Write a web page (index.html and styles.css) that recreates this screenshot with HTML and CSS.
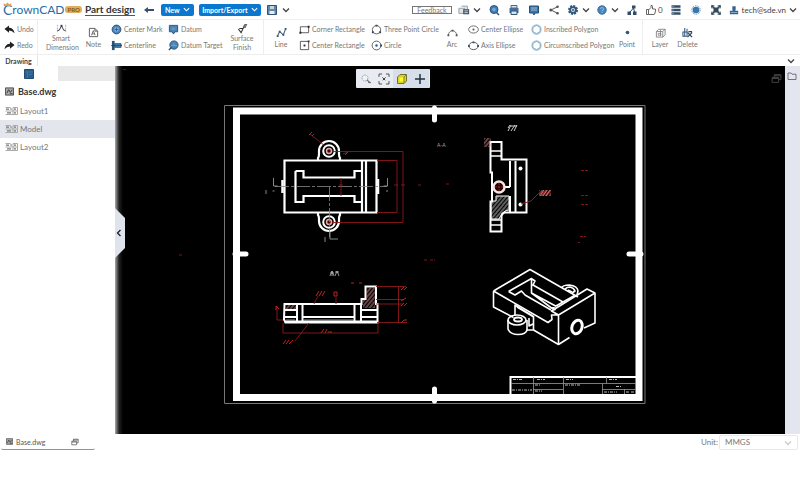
FILE: index.html
```html
<!DOCTYPE html>
<html lang="en">
<head>
<meta charset="utf-8">
<meta name="viewport" content="width=device-width, initial-scale=1">
<title>CrownCAD - Base.dwg</title>
<link rel="stylesheet" href="styles.css">
</head>
<body>
<svg class="sprite" aria-hidden="true">
  <symbol id="chev" viewBox="0 0 8 8"><path d="M1 2.5 4 5.5 7 2.5" fill="none" stroke="currentColor" stroke-width="1.3"/></symbol>
  <symbol id="back" viewBox="0 0 12 12"><path d="M1 6 5 3v2h6v2H5v2z" fill="#34506e"/></symbol>
  <symbol id="save" viewBox="0 0 12 12"><path d="M1.5 1.5h9v9h-9z" fill="#6387a6" stroke="#34506e"/><path d="M4 2h4v3H4z" fill="#c5d3df"/><path d="M3.5 7h5v3h-5z" fill="#e7edf2"/></symbol>
  <symbol id="copy" viewBox="0 0 14 12"><path d="M1 4h7v6H1zM4 1.5h7V5" fill="#dfe4e8" stroke="#8b98a3"/><path d="M6 5h7v6H6z" fill="#44596c"/><path d="M7.500 7h4M7.500 9h4" stroke="#d5dde4"/></symbol>
  <symbol id="search" viewBox="0 0 12 12"><circle cx="6" cy="5.500" r="4" fill="#3f7dbb" stroke="#285582"/><circle cx="6" cy="5.500" r="1.800" fill="#75a7d5"/><path d="m8.500 8.500 2.500 2.500" stroke="#285582" stroke-width="1.500"/></symbol>
  <symbol id="print" viewBox="0 0 12 12"><path d="M3 1.500h6V4H3z" fill="#dbe4ec" stroke="#466a8c"/><path d="M1.500 4h9v5h-9z" fill="#466f99"/><path d="M3 7h6v3.500H3z" fill="#dbe4ec" stroke="#345474"/></symbol>
  <symbol id="screen" viewBox="0 0 12 12"><path d="M1.500 2h9v7H7l-1 2-1-2H1.500z" fill="#3c73a9" stroke="#294e73"/><path d="M3 4h6M3 6h6" stroke="#9dbddb"/></symbol>
  <symbol id="share" viewBox="0 0 12 12"><path d="M10 2.500 3 6l7 3.500" fill="none" stroke="#555"/><circle cx="9.500" cy="2.800" r="1.300" fill="#555"/><circle cx="9.500" cy="9.200" r="1.300" fill="#555"/><circle cx="2.800" cy="6" r="1.500" fill="#555"/></symbol>
  <symbol id="gear" viewBox="0 0 12 12"><circle cx="6" cy="6" r="4" fill="none" stroke="#31567c" stroke-width="2" stroke-dasharray="2 1.100"/><circle cx="6" cy="6" r="2.900" fill="#d7e4ef" stroke="#31567c" stroke-width="1.800"/><circle cx="6" cy="6" r="1" fill="#31567c"/></symbol>
  <symbol id="help" viewBox="0 0 12 12"><circle cx="6" cy="6" r="4.200" fill="#4485c0" stroke="#376b9a"/><path d="M4.500 5a1.500 1.500 0 1 1 1.500 1.500v1M6 8v1" stroke="#8dbbe0" fill="none"/></symbol>
  <symbol id="nodes" viewBox="0 0 12 12"><path d="M6 1.500h3.500v3H6zM1.500 7.500H5V11H1.500zM7 7.500h3.500V11H7z" fill="#2f4d6b"/><path d="M7.500 4 4 8M7.500 4l1 4" stroke="#2f4d6b"/></symbol>
  <symbol id="thumb" viewBox="0 0 12 12"><path d="M1.500 5.500h2v5h-2zM3.500 6 6 3.500V1.500q1.500-.5 1.500 1V5h2.800l.4 1-1 4-.7.500H3.500" fill="none" stroke="#555" stroke-width=".9"/></symbol>
  <symbol id="bars" viewBox="0 0 12 12"><path d="M1.500 2.500h9M1.500 6h9M1.500 9.500h9" stroke="#354f68" stroke-width="2.400"/><path d="M2.500 2.500h1M2.500 6h1M2.500 9.500h1" stroke="#b7cad9"/></symbol>
  <symbol id="burst" viewBox="0 0 12 12"><circle cx="6" cy="6" r="3.300" fill="#3976ac"/><circle cx="6" cy="6" r="4.200" fill="none" stroke="#5a90bd" stroke-dasharray="1.600 1"/></symbol>
  <symbol id="expand" viewBox="0 0 12 12"><path d="m2 2 8 8M10 2l-8 8" stroke="#33485c" stroke-width="1.500"/><path d="M2 4.500 1.500 1.500l3 .5M7.500 2l3-.5-.5 3M10 7.500l.5 3-3-.5M4.500 10l-3 .5.500-3" fill="none" stroke="#33485c"/><path d="M3.500 3.500h5v5h-5z" fill="#33485c"/></symbol>
  <symbol id="user" viewBox="0 0 12 12"><path d="M4 1.500h4v4L7.500 7h3.500v4H1V7h3.500L4 5.500z" fill="#38638d"/><path d="M2 9h8" stroke="#91b4d3"/></symbol>
  <symbol id="undo" viewBox="0 0 12 12"><path d="M.5 5.500 5.500 1.500V4q5 0 6 6Q9 7 5.500 7v2.500z" fill="#222"/></symbol>
  <symbol id="redo" viewBox="0 0 12 12"><path d="M11.500 5.500 6.500 1.500V4q-5 0-6 6Q3 7 6.500 7v2.500z" fill="#222"/></symbol>
  <symbol id="dim" viewBox="0 0 12 12"><path d="M1.500 2v8M10.500 2v8" stroke="#999" stroke-width=".8" stroke-dasharray="2 1"/><path d="M3.500 8 6 3l2.500 5M1.500 8h2M8.500 8h2" fill="none" stroke="#334"/><path d="M5 2h2v2H5z" fill="#334"/></symbol>
  <symbol id="note" viewBox="0 0 12 12"><path d="M1.500 1.500h6l3 3v6h-9zM7.500 1.500v3h3" fill="none" stroke="#555"/><path d="m3.800 9 2-5 2 5M4.500 7.500h2.600" fill="none" stroke="#555" stroke-width=".9"/></symbol>
  <symbol id="cmark" viewBox="0 0 12 12"><circle cx="6" cy="6" r="4.800" fill="#4784b9" stroke="#244e76"/><circle cx="6" cy="6" r="2.600" fill="#80b1da"/><path d="M6 4v4M4 6h4" stroke="#244e76" stroke-width=".8"/></symbol>
  <symbol id="cline" viewBox="0 0 12 12"><path d="M1 1h3v10H1z" fill="#295478"/><path d="M4 4h7v4H4z" fill="#4b83b5" stroke="#295478"/><path d="M0 6h12" stroke="#173550" stroke-width=".7"/></symbol>
  <symbol id="datum" viewBox="0 0 12 12"><path d="M1.500 1.500h9v7H7.500L6 11 4.500 8.500h-3z" fill="#4b83b5" stroke="#294f74"/><path d="M4 4h4v2.500H4z" fill="#6297c3"/></symbol>
  <symbol id="dtarget" viewBox="0 0 12 12"><circle cx="6.500" cy="5.500" r="4.500" fill="#4b83b5" stroke="#294f74"/><path d="M3 6h7M6.500 3v2.500" stroke="#7cabd1" stroke-width=".8"/><path d="m1 11 3-3" stroke="#294f74" stroke-width="1.500"/></symbol>
  <symbol id="surface" viewBox="0 0 12 12"><path d="m1.500 6.500 3 4L8.500 2h2.500M2.500 6h4" fill="none" stroke="#333" stroke-width="1.200"/><circle cx="8.500" cy="4" r="1.600" fill="#6a7682"/></symbol>
  <symbol id="line" viewBox="0 0 12 12"><path d="m1.500 10 2.500-5 4 3.500L10.500 2" fill="none" stroke="#4c6378" stroke-width="1.200"/><path d="M.8 9h2v2h-2zM3 4h2v2H3zM7 7.500h2v2H7zM9.500 1h2v2h-2z" fill="#31567b"/></symbol>
  <symbol id="crect" viewBox="0 0 12 12"><path d="M1.500 3h9v6.500h-9z" fill="none" stroke="#555"/><path d="M.5 8.500h2v2h-2zM9.500 2h2v2h-2z" fill="#222"/></symbol>
  <symbol id="mrect" viewBox="0 0 12 12"><path d="M1.500 1.500h9v9h-9z" fill="none" stroke="#555"/><path d="M5 5h2v2H5zM9.500.5h2v2h-2z" fill="#333"/></symbol>
  <symbol id="c3" viewBox="0 0 12 12"><circle cx="6" cy="6.300" r="4.500" fill="none" stroke="#555"/><path d="M5 .8h2v2H5zM1 8h2v2H1zM9 8h2v2H9z" fill="#31485e"/></symbol>
  <symbol id="c1" viewBox="0 0 12 12"><circle cx="6" cy="6" r="4.800" fill="none" stroke="#555"/><circle cx="6" cy="6" r="1.300" fill="#1f5d98"/><path d="M10 5h2v2h-2z" fill="#31485e"/></symbol>
  <symbol id="arc" viewBox="0 0 12 12"><path d="M1.500 9a4.500 5 0 0 1 9 0" fill="none" stroke="#666"/><path d="M.5 8h2v2h-2zM9.500 8h2v2h-2zM5 3h2v2H5z" fill="#555"/></symbol>
  <symbol id="el1" viewBox="0 0 12 12"><ellipse cx="6" cy="6" rx="5.300" ry="3.900" fill="none" stroke="#666"/><path d="M5 5h2v2H5z" fill="#555"/></symbol>
  <symbol id="el2" viewBox="0 0 12 12"><ellipse cx="6" cy="6.500" rx="5" ry="4" fill="none" stroke="#555"/><path d="M0 5.500h2v2H0zM10 5.500h2v2h-2zM5 1.500h2v2H5z" fill="#3e5568"/></symbol>
  <symbol id="poly" viewBox="0 0 12 12"><circle cx="6" cy="6" r="5" fill="none" stroke="#9fc6df" stroke-width="1.300"/><path d="m6 1.500 4 2.300v4.400l-4 2.300-4-2.300V3.800z" fill="none" stroke="#6b92ac" stroke-width=".8"/></symbol>
  <symbol id="point" viewBox="0 0 12 12"><circle cx="6" cy="6" r="2" fill="#31567b"/></symbol>
  <symbol id="layer" viewBox="0 0 12 12"><path d="M1.500 5 4 2.500h7v6L8.500 11h-7zM1.500 5h7v6M8.500 5 11 2.500" fill="none" stroke="#777" stroke-width=".9"/><path d="M3.500 7h3v2h-3zM6 3v7" fill="none" stroke="#777" stroke-width=".8"/></symbol>
  <symbol id="del" viewBox="0 0 12 12"><path d="M3 1v9M1 5.500h4.500V10H1zM5.500 2v4" fill="none" stroke="#31567b" stroke-width="1.100"/><path d="m6 6 5 5M11 6l-5 5M7 5h4" stroke="#294865" stroke-width="1.300"/></symbol>
  <symbol id="sheet" viewBox="0 0 10 10"><path d="M.5 1h9v8h-9z" fill="#aaa" stroke="#444"/><path d="m2 7 2-4 2 3 2-3M5.500 7.500h3" fill="none" stroke="#333"/></symbol>
  <symbol id="layout" viewBox="0 0 13 10"><path d="M.5 1.500h5M.5 5h12M.5 8.500h12M8 1.500h4.500v7H8z" fill="none" stroke="#aaa"/><path d="M1 3.200h3M2 6.800h4M9 3.200h2M9 6.800h2M5.500 2.500l1 1" stroke="#777" stroke-width="1.200"/></symbol>
  <symbol id="panel" viewBox="0 0 10 10"><path d="M.5.5h9v9h-9z" fill="#286090" stroke="#244b70"/><path d="M1 3h8M3.500 3v6M4.500 5.500H8" stroke="#437aa7" stroke-width=".8"/></symbol>
  <symbol id="win" viewBox="0 0 10 10"><path d="M1 4h6v4.500H1zM1 5h6M3 4V1.500h6V6H7M3 2.500h6" fill="none" stroke="currentColor" stroke-width=".9"/></symbol>
  <symbol id="folder" viewBox="0 0 10 10"><path d="M1 2h3l1 1.200h4V8.500H1z" fill="none" stroke="#666" stroke-width=".9"/></symbol>
  <symbol id="zoomwin" viewBox="0 0 12 12"><circle cx="5" cy="5" r="3" fill="#eef1f5" stroke="#a2a8ae" stroke-dasharray="2 .6"/><path d="m7 7 3.500 3M8 9.500h3" stroke="#777" stroke-width="1.200"/></symbol>
  <symbol id="fit" viewBox="0 0 12 12"><path d="M1 4V1h3M8 1h3v3M11 8v3H8M4 11H1V8" fill="none" stroke="#555"/><path d="m4 4 4 4M8 4 4 8" stroke="#666" stroke-width=".8" stroke-dasharray="1.500 1"/><path d="M5 5h2v2H5z" fill="#444"/></symbol>
  <symbol id="cube" viewBox="0 0 12 12"><path d="M1.500 4 4 1.500h6.500V8L8 10.500H1.500z" fill="#d8d228" stroke="#77732a"/><path d="M3.500 4.500h4v4h-4z" fill="#fff92f"/><path d="M8 4v6.500M8 4l2.500-2.500" stroke="#77732a" stroke-width=".8"/></symbol>
  <symbol id="plus" viewBox="0 0 12 12"><path d="M6 1v10M1 6h10" stroke="#26323d" stroke-width="1.500"/></symbol>
</svg>

<header class="topbar">
  <div class="brand">
    <svg class="crown" viewBox="0 0 12 5"><path d="m1 5 0-4 2.500 2L6 .5 8.500 3 11 1v4z" fill="#dfa24a"/></svg>
    <span class="brand-c">C</span><span class="brand-name">rownCAD</span><span class="pro">PRO</span>
  </div>
  <h1 class="doc-title">Part design</h1>
  <button class="icon-btn" aria-label="Back"><svg><use href="#back"/></svg></button>
  <button class="primary">New <svg><use href="#chev"/></svg></button>
  <button class="primary wide">Import/Export <svg><use href="#chev"/></svg></button>
  <button class="icon-btn drop" aria-label="Save"><svg><use href="#save"/></svg><svg class="chev"><use href="#chev"/></svg></button>
  <nav class="top-tools">
    <button class="feedback">Feedback</button>
    <button class="icon-btn drop" aria-label="Windows"><svg><use href="#copy"/></svg><svg class="chev"><use href="#chev"/></svg></button>
    <button class="icon-btn" aria-label="Search"><svg><use href="#search"/></svg></button>
    <button class="icon-btn" aria-label="Print"><svg><use href="#print"/></svg></button>
    <button class="icon-btn" aria-label="Present"><svg><use href="#screen"/></svg></button>
    <button class="icon-btn" aria-label="Share"><svg><use href="#share"/></svg></button>
    <button class="icon-btn drop" aria-label="Settings"><svg><use href="#gear"/></svg><svg class="chev"><use href="#chev"/></svg></button>
    <button class="icon-btn drop" aria-label="Help"><svg><use href="#help"/></svg><svg class="chev"><use href="#chev"/></svg></button>
    <button class="icon-btn" aria-label="Structure"><svg><use href="#nodes"/></svg></button>
    <button class="icon-btn likes" aria-label="Likes"><svg><use href="#thumb"/></svg>0</button>
    <button class="icon-btn" aria-label="List"><svg><use href="#bars"/></svg></button>
    <button class="icon-btn" aria-label="Plugins"><svg><use href="#burst"/></svg></button>
    <button class="icon-btn" aria-label="Full screen"><svg><use href="#expand"/></svg></button>
    <button class="icon-btn account"><svg><use href="#user"/></svg><span>tech@sde.vn</span><svg class="chev"><use href="#chev"/></svg></button>
  </nav>
</header>

<div class="ribbon">
  <div class="group history">
    <div class="stack"><button class="tool"><svg><use href="#undo"/></svg>Undo</button><button class="tool"><svg><use href="#redo"/></svg>Redo</button></div>
  </div>
  <div class="group annotate">
    <button class="tool big two"><svg><use href="#dim"/></svg>Smart<br>Dimension</button>
    <button class="tool big"><svg><use href="#note"/></svg>Note</button>
    <div class="stack"><button class="tool"><svg><use href="#cmark"/></svg>Center Mark</button><button class="tool"><svg><use href="#cline"/></svg>Centerline</button></div>
    <div class="stack"><button class="tool"><svg><use href="#datum"/></svg>Datum</button><button class="tool"><svg><use href="#dtarget"/></svg>Datum Target</button></div>
    <button class="tool big two"><svg><use href="#surface"/></svg>Surface<br>Finish</button>
  </div>
  <div class="group sketch">
    <button class="tool big"><svg><use href="#line"/></svg>Line</button>
    <div class="stack"><button class="tool"><svg><use href="#crect"/></svg>Corner Rectangle</button><button class="tool"><svg><use href="#mrect"/></svg>Center Rectangle</button></div>
    <div class="stack"><button class="tool"><svg><use href="#c3"/></svg>Three Point Circle</button><button class="tool"><svg><use href="#c1"/></svg>Circle</button></div>
    <button class="tool big"><svg><use href="#arc"/></svg>Arc</button>
    <div class="stack"><button class="tool"><svg><use href="#el1"/></svg>Center Ellipse</button><button class="tool"><svg><use href="#el2"/></svg>Axis Ellipse</button></div>
    <div class="stack"><button class="tool"><svg><use href="#poly"/></svg>Inscribed Polygon</button><button class="tool"><svg><use href="#poly"/></svg>Circumscribed Polygon</button></div>
    <button class="tool big"><svg><use href="#point"/></svg>Point</button>
  </div>
  <div class="group edit">
    <button class="tool big"><svg><use href="#layer"/></svg>Layer</button>
    <button class="tool big"><svg><use href="#del"/></svg>Delete</button>
  </div>
</div>

<div class="tabs">
  <button class="tab">Drawing</button>
  <button class="icon-btn collapse" aria-label="Collapse ribbon"><svg class="chev"><use href="#chev"/></svg></button>
</div>

<main class="workspace">
  <aside class="sidebar">
    <div class="side-tabs"><button class="side-tab" aria-label="Layouts"><svg><use href="#panel"/></svg></button></div>
    <h2 class="file"><svg><use href="#sheet"/></svg>Base.dwg</h2>
    <ul class="layouts">
      <li><a href="#layout1"><svg><use href="#layout"/></svg>Layout1</a></li>
      <li><a class="current" href="#model"><svg><use href="#layout"/></svg>Model</a></li>
      <li><a href="#layout2"><svg><use href="#layout"/></svg>Layout2</a></li>
    </ul>
  </aside>

  <section class="canvas">
    <svg class="drawing" viewBox="115 66 670 368" fill="none" stroke="#fff">
      <defs>
        <pattern id="hatch" width="3" height="3" patternUnits="userSpaceOnUse" patternTransform="rotate(40)"><path d="M1 0v3" stroke="#bbb" stroke-width="1"/></pattern>
        <pattern id="rhatch" width="3" height="3" patternUnits="userSpaceOnUse" patternTransform="rotate(40)"><path d="M1 0v3" stroke="#c88" stroke-width="1"/></pattern>
      </defs>
      <path d="M224.500 105.500h420.500v298H224.500z" stroke="#777"/>
      <path d="M236.500 111h402.500v286.500H236.500z" stroke-width="7"/>
      <path d="M434.500 108v12M434.500 389v12M235 254h11M629 254h12" stroke-width="5" stroke-linecap="round"/>
      <path d="M123 69.500h3" stroke="#800"/>

      <!-- Plan view -->
      <g stroke-width="2.200">
        <path d="M284.500 160.500h92v52h-92zM362 160.500v52M366 160.500v52"/>
        <path d="M295.500 171h8v6.500h51V171h7M295.500 171v31h8v-6h51v6h7"/>
        <path d="M318 160v-2q1-1 1-4v-3a10 10 0 0 1 20 0v3q0 3 1 4v2M318 213v2q1 1 1 4v2a10 10 0 0 0 20 0v-2q0-3 1-4v-2"/>
        <path d="M282.500 180v13M378 179v15" stroke-width="2.500"/>
      </g>
      <circle cx="329" cy="151" r="5.800" stroke-width="2"/><circle cx="329" cy="222" r="5.800" stroke-width="2"/>
      <circle cx="329" cy="151" r="2.500" fill="#500" stroke="#daa" stroke-width="1.500"/><circle cx="329" cy="222" r="2.500" fill="#500" stroke="#daa" stroke-width="1.500"/>
      <path d="M275 186.500h112M329.500 187v50" stroke="#888" stroke-width=".8" stroke-dasharray="14 2 3 2"/>
      <path d="M273.500 178v8h4M387.500 178v8h-4M330 232v7h8M272.500 191h2M386 191h2M266 190v4M325 237v5" stroke="#aaa" stroke-width=".8"/>
      <path d="m310 134 15 12M332 151.500h71v71h-71M377 160.500h20v52h-20M341 178v18M343 154l5-2M394 185h4M401 185h4M339 185h4" stroke="#8c1616" stroke-width=".9"/>
      <path d="m309 135 3-3M312 136l2-2M345 155l3-3" stroke="#a22"/>

      <!-- Section A-A -->
      <g stroke-width="2">
        <path d="M490.500 142h11v17.500h25v53h-22q-3 1-3 4v15h-11v-30h1.500v-29h-1.500zM510 161v26M515.500 161v51M505 187h5M510 196v16"/>
        <path d="M490.500 151h11M490.500 156h11M491 220h10M491 225h10" stroke-width="1.300"/>
        <path d="M491 201h5v-5h13v14q-6 0-10 9h-8z" fill="url(#hatch)" stroke-width="1"/>
      </g>
      <circle cx="499" cy="187" r="5.500" fill="#250000" stroke="#f4e4e4" stroke-width="2.500"/>
      <path d="M499 183v8M495 187h8" stroke="#822" stroke-dasharray="2 1"/>
      <circle cx="520.500" cy="168.500" r="2" fill="#fff" stroke="none"/><circle cx="520.500" cy="204.500" r="2" fill="#fff" stroke="none"/>
      <path d="m508 131 3-6M511 131l4-6M514 131l3-6M508 128l2-3M511 126h6" stroke="#ccc" stroke-width="1"/>
      <path d="M484 138h7v9h-7zM539 190h12v6h-12z" fill="url(#rhatch)" stroke="none"/>
      <path d="m521 204 10-3 8-8M539 193h12" stroke="#9e1717"/>
      <path d="m540 196 4-6M543 196l4-6M546 196l4-6" stroke="#e66"/>
      <text class="mark" x="437" y="147">A-A</text>
      <path d="M581 170.500h7M581 195.500h7M581 204.500h7M580 236.500h6M578 242.500h2M418 185h3M446 184h3M424 260h4M430 260h5M179 255h4" stroke="#801515" stroke-dasharray="3 1"/>

      <!-- Front section -->
      <g stroke-width="2">
        <path d="M284.500 304h77v-5h4v-12.500h10.500V304h1.500v18.500h-92l-1.500-3zM297 304v19M302.500 304v19M354.500 304v19M361 304v19M303 317h51M284 310h13M284 317h13M362 310h16M362 317h16M284 321.500h94"/>
      </g>
      <path d="M363 300h3v-12h9v20h-12zM286 305h10v4h-10z" fill="url(#rhatch)" stroke="none"/>
      <path d="M286 320h9M304 320h49" stroke="#bbb" stroke-width=".8"/>
      <path d="m330 276 2-5 2 5M330 273h4M335 276l2-5 2 5M335 272h4M332 271v5" stroke="#bbb" stroke-width=".8"/>
      <path d="M376 286.500h30M376 299.500h27M376 304h27M377 322.500h30M398.500 287v36M283 323v10h95v-10M277 306v14h6M309 323l-14 18M318 296l-4 8M336 297v7" stroke="#8e1818" stroke-width=".9"/>
      <path d="m316 296 3-5M319 296l3-5M322 296l3-5M334 296v-4h3v4zM283 344l3-4M286 344l3-4M289 344l4-4M321 333l3-4M325 333l2-4M328 332h4M276 310v-4l3 3M401 290l3-3M404 290l3-3M401 301l5-3M401 306l3-3M404 306l3-3M401 323l3-3M404 320h3M351 283h3M359 283h3" stroke="#b82424"/>

      <!-- Isometric view -->
      <g stroke-width="1.600" stroke-linejoin="round">
        <path d="M493.500 291 530 269.500l48 27.500M493.500 291v16l20 10.500M493.500 291l54.500 31.500 4-3-.5-4.500 6.500 0M558.500 315v29.500l-25-14.500M558.500 344.500l11-7M584 328l11-5v-30L558.500 315l-7-4 35.500-22 8 4"/>
        <path d="M508.500 291.500 531.500 278.500v14.500l20 15 4 2M508.500 291.500l6.500 3.500 6.500-4 4 4.500M532 279l3 2-2 4 30 17M525 295l26 15M531.500 293l25 13.500M551.500 308.500l23-13"/>
        <path d="M515 316v-11l18.500 11.500v13.500h-7M517 307l16 9.500M529 318v8l4-2"/>
        <ellipse cx="517" cy="320" rx="9" ry="5"/><ellipse cx="518" cy="319.500" rx="4" ry="2" stroke-width="1.800"/><path d="M508 320v9q2 5.500 10 5.500t9-4.500v-10"/>
        <path d="M561.500 288q1-3 8-3 8 1 8.500 6l-1 4M565 289q2-2 5-2 4 1 5 4l-3 2M568 290l4 2"/>
        <ellipse cx="577" cy="327" rx="5" ry="7" stroke-width="3" transform="rotate(20 577 327)"/>
      </g>

      <!-- Title block -->
      <path d="M510.500 395v-18H636" stroke-width="2"/>
      <path d="M533.500 377v17M563.500 377v17M606.500 377v6M602.500 384v10M511 383.500h125M533 389.500h30M602 389.500h34M624.500 389v5" stroke="#999" stroke-width=".8"/>
      <path d="M512 390h20M535 385h6M535 391h7M565 385h15M616 386.500h6M604 392h13M626 392h3M631 392h3M537 379.500h8M566 379.500h7M609 379.500h8M513 379.500h9" stroke="#bbb" stroke-dasharray="3 1 1 1"/>
    </svg>
    <button class="handle" aria-label="Hide panel"><svg viewBox="0 0 8 8"><path d="M5.500 1 2.500 4l3 3" fill="none" stroke="#222" stroke-width="1.300"/></svg></button>
    <div class="view-tools">
      <button aria-label="Zoom window"><svg><use href="#zoomwin"/></svg></button>
      <button aria-label="Fit"><svg><use href="#fit"/></svg></button>
      <button class="on" aria-label="Display style"><svg><use href="#cube"/></svg></button>
      <button class="on" aria-label="Add"><svg><use href="#plus"/></svg></button>
    </div>
    <button class="restore" aria-label="Restore window"><svg><use href="#win"/></svg></button>
  </section>

  <aside class="rail"><button class="icon-btn" aria-label="Files"><svg><use href="#folder"/></svg></button></aside>
</main>

<footer class="statusbar">
  <button class="open-file"><svg><use href="#sheet"/></svg><span>Base.dwg</span><svg class="win"><use href="#win"/></svg></button>
  <div class="unit">
    <label for="unit">Unit:</label>
    <div class="select"><select id="unit"><option>MMGS</option></select><svg><use href="#chev"/></svg></div>
  </div>
</footer>
</body>
</html>
```
FILE: styles.css
```css
* { box-sizing: border-box; }

body {
  margin: 0;
  background: #fff;
  color: #777;
  font: 7px/8px Lato, "Open Sans", sans-serif;
}

button, select {
  margin: 0;
  padding: 0;
  border: 0;
  background: none;
  color: inherit;
  font: inherit;
}

svg { display: block; flex: none; }
.sprite { position: absolute; width: 0; height: 0; }

/* Top bar */
.topbar {
  display: flex;
  align-items: center;
  height: 20px;
  padding: 0 3px;
  border-bottom: 1px solid #f0f0f0;
}

.brand {
  position: relative;
  display: flex;
  align-items: center;
  width: 82px;
  color: #1e6eab;
  font-size: 12px;
  line-height: 18px;
}
.brand-c { font-size: 14px; }
.crown { position: absolute; top: 1px; left: 0; width: 9px; height: 4px; }
.pro {
  margin-left: 1px;
  padding: 0 2px;
  border-radius: 3px;
  background: #dfae62;
  color: #8c5a16;
  font-size: 6px;
  font-weight: 700;
  line-height: 7px;
}

.doc-title {
  margin: 0 7px 0 0;
  border-bottom: 1px solid #555;
  color: #333;
  font-size: 10px;
  font-weight: 700;
  line-height: 12px;
}

.icon-btn { display: flex; align-items: center; justify-content: center; min-width: 14px; color: #444; }
.icon-btn svg { width: 12px; height: 12px; }
.icon-btn .chev { width: 8px; height: 8px; }
.drop { gap: 3px; }

.primary {
  display: flex;
  align-items: center;
  justify-content: center;
  gap: 3px;
  width: 33px;
  height: 12px;
  margin-left: 5px;
  border-radius: 2px;
  background: #0b78d0;
  color: #fff;
  font-weight: 700;
}
.primary.wide { width: 62px; }
.primary svg { width: 7px; height: 7px; }
.primary + .drop { margin-left: 5px; gap: 4px; }

.top-tools { display: flex; align-items: center; gap: 6px; margin-left: auto; }
.feedback { width: 40px; height: 8px; border: 1px solid #777; line-height: 6px; }
.likes { gap: 1px; font-size: 8px; }
.account { gap: 3px; font-size: 8px; }
.account svg { width: 10px; height: 10px; }

/* Ribbon */
.ribbon { display: flex; height: 35px; border-bottom: 1px solid #eee; }
.group {
  display: grid;
  align-items: center;
  column-gap: 9px;
  padding: 0 8px;
  border-right: 1px solid #eee;
}
.group:last-child { border-right: 0; }
.history { padding: 0 4px; grid-template-columns: 29px; }
.annotate { grid-template-columns: 30px 17px 48px 52px 26px; }
.sketch { grid-template-columns: 18px 63px 65px 14px 54px 80px 14px; }
.edit { grid-template-columns: 18px 19px; }

.stack { display: grid; row-gap: 5px; }
.tool { display: flex; align-items: center; gap: 2px; white-space: nowrap; }
.tool svg { width: 11px; height: 11px; }
.big { flex-direction: column; justify-content: center; }
.two { display: block; text-align: center; line-height: 9px; }
.two svg { width: 11px; height: 11px; margin: 0 auto; }

/* Tab strip */
.tabs { display: flex; justify-content: space-between; height: 11px; padding-right: 2px; }
.tab { width: 38px; border-right: 1px solid #e5e5e5; color: #444; font-weight: 700; }

/* Workspace */
.workspace { display: flex; }
.sidebar { width: 115px; flex: none; }
.side-tabs { height: 15px; background: #e9e9e9; }
.side-tab { display: flex; align-items: center; justify-content: center; width: 58px; height: 15px; background: #fff; }
.side-tab svg { width: 10px; height: 10px; }
.file {
  display: flex;
  align-items: center;
  gap: 4px;
  height: 21px;
  margin: 0;
  padding-left: 5px;
  color: #333;
  font-size: 9px;
  font-weight: 700;
}
.file svg { width: 9px; height: 9px; }
.layouts { margin: 0; padding: 0; list-style: none; }
.layouts a {
  display: flex;
  align-items: center;
  gap: 2px;
  height: 18px;
  padding-left: 5px;
  color: #777;
  font-size: 8px;
  text-decoration: none;
}
.layouts svg { width: 13px; height: 10px; }
.layouts .current { background: #e3e6ed; }

.canvas { position: relative; flex: 1; min-width: 0; background: linear-gradient(90deg, #aaa, #222 4px, #000 8px); }
.drawing { width: 100%; height: auto; }
.mark { fill: #aaa; stroke: none; font-size: 5px; }
.handle {
  position: absolute;
  top: 142px;
  left: 0;
  display: flex;
  align-items: center;
  width: 10px;
  height: 50px;
  background: #dfe3eb;
  clip-path: polygon(0 0, 100% 20%, 100% 80%, 0 100%);
}
.handle svg { width: 8px; height: 8px; }
.view-tools {
  position: absolute;
  top: 3px;
  left: 36%;
  display: flex;
  height: 19px;
  padding: 0 1px;
  border-radius: 1px;
  background: #e8ecf2;
}
.view-tools button { display: flex; align-items: center; justify-content: center; width: 18px; }
.view-tools .on { background: #d7dfea; }
.view-tools svg { width: 12px; height: 12px; }
.restore { position: absolute; top: 7px; right: 3px; color: #444; }
.restore svg { width: 11px; height: 11px; }
.rail { width: 15px; flex: none; padding-top: 5px; background: #e3e6ee; }
.rail svg { width: 10px; height: 10px; }

/* Status bar */
.statusbar { display: flex; justify-content: space-between; height: 16px; padding: 0 2px 0 1px; }
.open-file {
  display: flex;
  align-items: center;
  gap: 3px;
  width: 94px;
  padding: 0 16px 0 5px;
  border-bottom: 1px solid #6e9ccc;
  border-radius: 2px;
  color: #555;
}
.open-file svg { width: 7px; height: 7px; }
.open-file .win { width: 8px; height: 8px; margin-left: auto; }
.unit { display: flex; align-items: center; gap: 1px; font-size: 8px; }
.select { position: relative; width: 79px; height: 15px; border: 1px solid #e8e8e8; border-radius: 2px; }
.select select { width: 100%; height: 100%; padding-left: 5px; appearance: none; }
.select svg { position: absolute; top: 3px; right: 5px; width: 8px; height: 8px; color: #ccc; pointer-events: none; }
```
